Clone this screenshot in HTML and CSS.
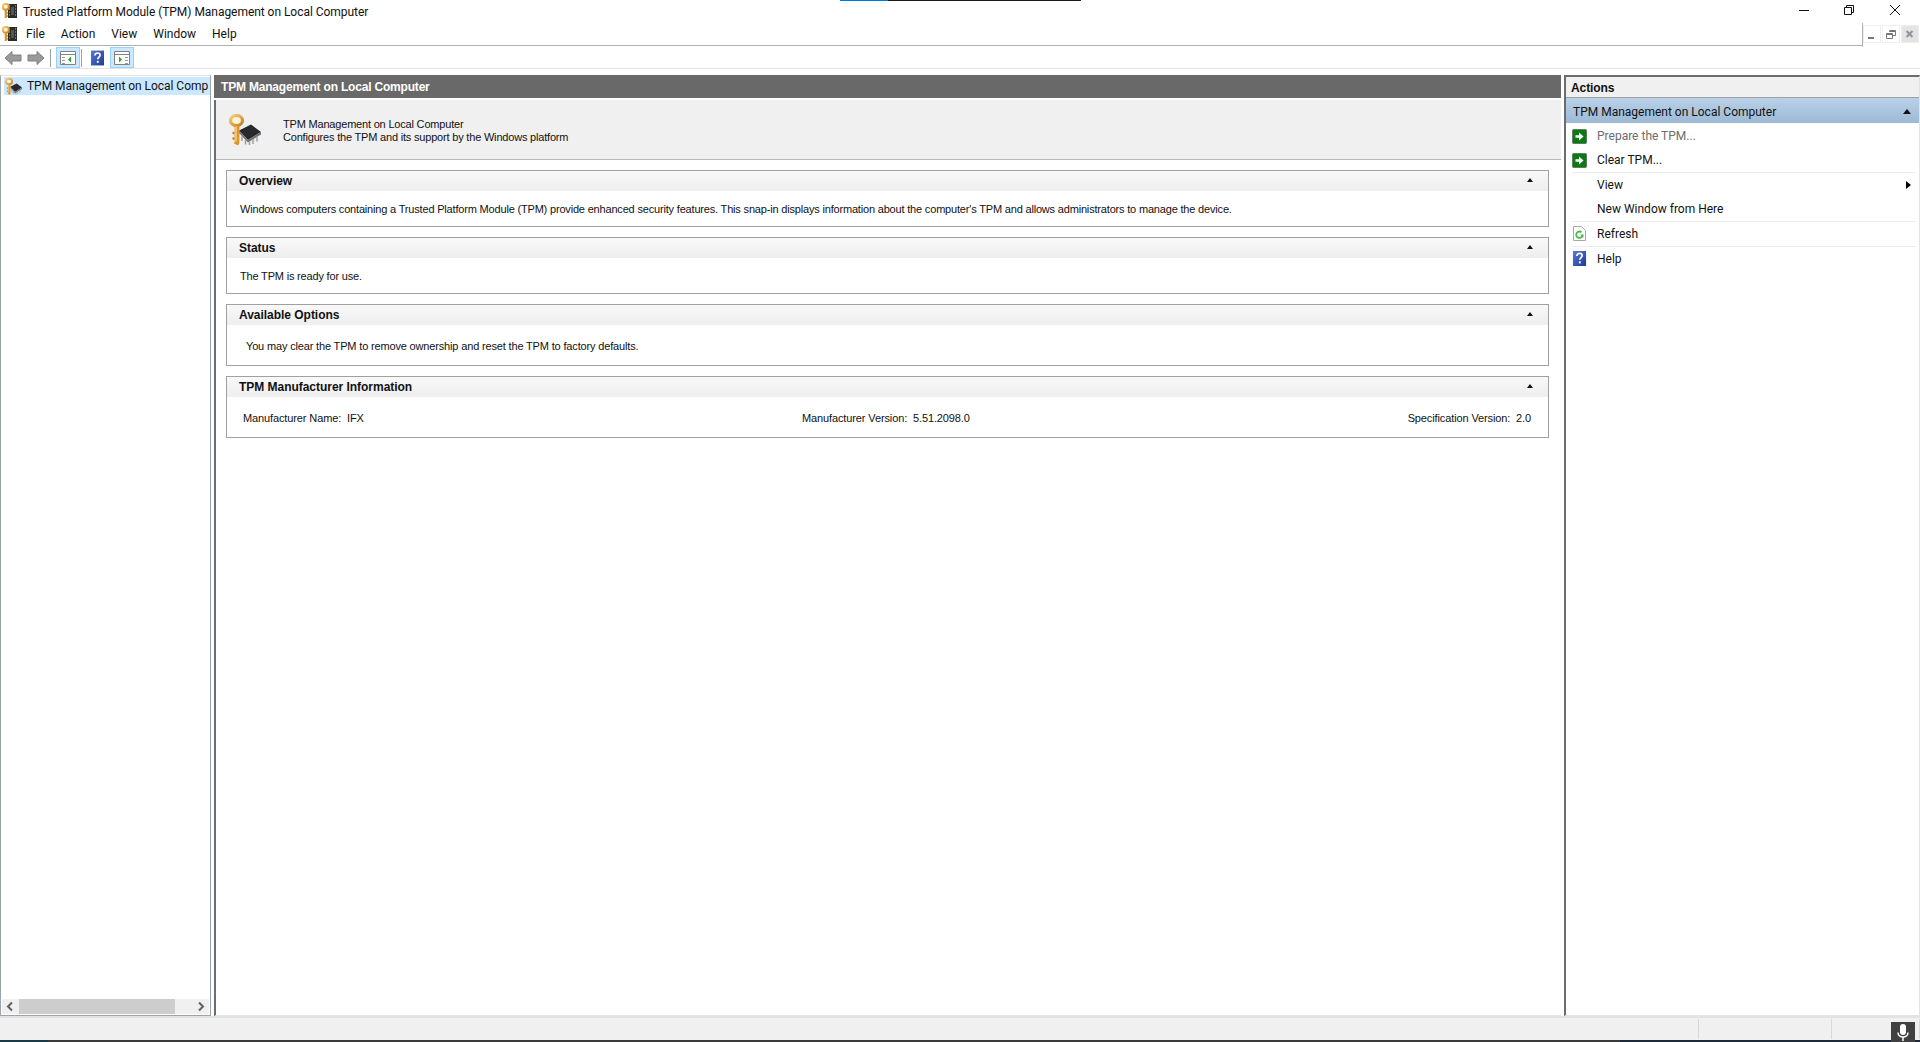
FILE: index.html
```html
<!DOCTYPE html>
<html lang="en">
<head>
<meta charset="utf-8">
<title>Trusted Platform Module (TPM) Management on Local Computer</title>
<link rel="stylesheet" href="styles.css">
</head>
<body>
<svg class="defs" width="0" height="0" aria-hidden="true">
  <defs>
    <linearGradient id="gold" x1="0" y1="0" x2="1" y2="1"><stop offset="0" stop-color="#f7cf7c"/><stop offset="1" stop-color="#c47f1c"/></linearGradient>
    <linearGradient id="blue" x1="0" y1="0" x2="1" y2="1"><stop offset="0" stop-color="#5a78d8"/><stop offset="1" stop-color="#1c3a94"/></linearGradient>
    <symbol id="appicon" viewBox="0 0 16 16">
      <rect x="6" y="1" width="9" height="14" fill="#2b2b2b"/>
      <path d="M7 3h1M7 6h1M7 9h1M7 12h1M13 3h1M13 6h1M13 9h1M13 12h1" stroke="#bbb" stroke-width="1"/>
      <rect x="9" y="4" width="3" height="8" fill="#555"/>
      <ellipse cx="3.800" cy="3.800" rx="3" ry="3" fill="#fff3d0" stroke="url(#gold)" stroke-width="2"/>
      <path d="M3.800 6.500V15M3.800 10h2M3.800 13h2" stroke="#d8932a" stroke-width="2.200"/>
    </symbol>
    <symbol id="tpmicon" viewBox="0 0 32 32">
      <path d="M10 16.500L22 10.500l10 7.500-13 8z" fill="#29292d"/>
      <path d="M10 16.500l9 9.500 13-8v2.500l-13 8-9-9.500z" fill="#6f6f74"/>
      <path d="M13 22v5M16.500 25.500v5M20.500 27.500v3.500M24 25v5M28 22.500v5" stroke="#a0a0a0" stroke-width="1.500"/>
      <ellipse cx="7.500" cy="6.500" rx="6" ry="5" fill="#fdf3d8" stroke="url(#gold)" stroke-width="3.200"/>
      <path d="M8 11.500v17l-1 2" fill="none" stroke="#dd962c" stroke-width="4.800"/>
      <path d="M5.500 19H3.500M5.500 24.500H3.500" stroke="#c47f1c" stroke-width="2.400"/>
      <path d="M7 12.500v15" stroke="#f9d488" stroke-width="1.400"/>
    </symbol>
    <symbol id="helpicon" viewBox="0 0 14 16">
      <rect width="14" height="16" fill="url(#blue)"/>
      <path d="M4.200 5.200C4.200 3.400 5.400 2.600 7 2.600s2.800.9 2.800 2.400c0 2-2.500 2.200-2.500 4.400" fill="none" stroke="#fff" stroke-width="1.800"/>
      <rect x="6.300" y="11" width="2" height="2.200" fill="#fff"/>
    </symbol>
    <symbol id="greenarrow" viewBox="0 0 15 15">
      <rect x=".5" y=".5" width="14" height="14" rx="1" fill="#0b7a13" stroke="#5d7d60"/>
      <path d="M3.500 6.200h3.500V3.500l4.500 4-4.500 4V8.800H3.500z" fill="#fff"/>
    </symbol>
  </defs>
</svg>

<div class="progress"><span class="progress-done"></span></div>

<div class="window">
  <header class="titlebar">
    <svg class="app-icon"><use href="#appicon"/></svg>
    <span class="title-text">Trusted Platform Module (TPM) Management on Local Computer</span>
    <div class="win-controls">
      <svg class="win-btn" viewBox="0 0 46 22"><path d="M19 10.500h10" stroke="#111" fill="none"/></svg>
      <svg class="win-btn" viewBox="0 0 46 22"><path d="M18.500 7.500h7v7h-7zM20.500 7.500v-2h7v7h-2" stroke="#111" fill="none"/></svg>
      <svg class="win-btn" viewBox="0 0 46 22"><path d="M18 5l10 10M28 5l-10 10" stroke="#111" fill="none"/></svg>
    </div>
  </header>

  <nav class="menubar">
    <svg class="menu-icon"><use href="#appicon"/></svg>
    <span class="menu-item">File</span>
    <span class="menu-item">Action</span>
    <span class="menu-item">View</span>
    <span class="menu-item">Window</span>
    <span class="menu-item">Help</span>
    <div class="mdi-controls">
      <span class="mdi-btn"><svg viewBox="0 0 18 18" width="18" height="18"><path d="M5 13h6" stroke="#777" stroke-width="2"/></svg></span>
      <span class="mdi-btn"><svg viewBox="0 0 18 18" width="18" height="18"><path d="M4.500 8.500h6v5h-6zM4.500 9.500h6M7.500 6.500v-1h6v5h-3M7.500 6.500h6" stroke="#777" fill="none"/></svg></span>
      <span class="mdi-btn mdi-close"><svg viewBox="0 0 18 18" width="18" height="18"><path d="M5.500 6l6 6M11.500 6l-6 6" stroke="#8a949c" stroke-width="2"/></svg></span>
    </div>
  </nav>

  <div class="toolbar">
    <svg class="tool-arrow" viewBox="0 0 18 16"><path d="M8 1.500L1 8l7 6.500V11h9V5H8z" fill="#9a9a9a" stroke="#808080"/></svg>
    <svg class="tool-arrow" viewBox="0 0 18 16"><path d="M10 1.500L17 8l-7 6.500V11H1V5h9z" fill="#9a9a9a" stroke="#808080"/></svg>
    <span class="tool-sep"></span>
    <span class="tool-btn active">
      <svg viewBox="0 0 16 14" width="16" height="14"><path d="M.5 .5h15v13H.5z" fill="#fff" stroke="#808080"/><path d="M.5 3.500h15" stroke="#808080"/><path d="M2 6h3v1H2zM2 9h3v1H2zM2 12h3v1H2z" fill="#999"/><path d="M11 5.500v6l-3-3z" fill="#2aa32a"/></svg>
    </span>
    <span class="tool-sep tool-sep-b"></span>
    <svg class="tool-help"><use href="#helpicon"/></svg>
    <span class="tool-btn active">
      <svg viewBox="0 0 16 14" width="16" height="14"><path d="M.5 .5h15v13H.5z" fill="#fff" stroke="#808080"/><path d="M.5 3.500h15" stroke="#808080"/><path d="M11 6h3v1h-3zM11 9h3v1h-3zM11 12h3v1h-3z" fill="#999"/><path d="M5 5.500v6l3-3z" fill="#2aa32a"/></svg>
    </span>
  </div>

  <main class="workspace">
    <aside class="tree">
      <div class="tree-body">
        <div class="tree-row">
          <svg class="tree-icon" viewBox="0 0 32 32"><use href="#tpmicon"/></svg>
          <span class="tree-label">TPM Management on Local Comp</span>
        </div>
      </div>
      <div class="hscroll">
        <svg class="hscroll-btn" viewBox="0 0 17 15"><path d="M10 3.500L6 7.500l4 4" fill="none" stroke="#606060" stroke-width="2"/></svg>
        <div class="hscroll-track"><div class="hscroll-thumb"></div></div>
        <svg class="hscroll-btn" viewBox="0 0 17 15"><path d="M7 3.500l4 4-4 4" fill="none" stroke="#606060" stroke-width="2"/></svg>
      </div>
    </aside>

    <section class="center">
      <h1 class="center-head">TPM Management on Local Computer</h1>
      <div class="center-frame">
        <div class="intro">
          <svg class="intro-icon"><use href="#tpmicon"/></svg>
          <div class="intro-text">
            <div>TPM Management on Local Computer</div>
            <div>Configures the TPM and its support by the Windows platform</div>
          </div>
        </div>
        <div class="sections">
          <article class="card card-overview">
            <div class="card-head"><span>Overview</span><i class="caret"></i></div>
            <p class="card-body">Windows computers containing a Trusted Platform Module (TPM) provide enhanced security features. This snap-in displays information about the computer's TPM and allows administrators to manage the device.</p>
          </article>
          <article class="card card-status">
            <div class="card-head"><span>Status</span><i class="caret"></i></div>
            <p class="card-body">The TPM is ready for use.</p>
          </article>
          <article class="card card-options">
            <div class="card-head"><span>Available Options</span><i class="caret"></i></div>
            <p class="card-body card-body-inset">You may clear the TPM to remove ownership and reset the TPM to factory defaults.</p>
          </article>
          <article class="card card-info">
            <div class="card-head"><span>TPM Manufacturer Information</span><i class="caret"></i></div>
            <div class="info-row">
              <span class="info-a">Manufacturer Name:&nbsp; IFX</span>
              <span class="info-b">Manufacturer Version:&nbsp; 5.51.2098.0</span>
              <span class="info-c">Specification Version:&nbsp; 2.0</span>
            </div>
          </article>
        </div>
      </div>
    </section>

    <aside class="actions">
      <div class="actions-title">Actions</div>
      <div class="actions-group"><span>TPM Management on Local Computer</span><i class="caret caret-large"></i></div>
      <ul class="action-list">
        <li class="action disabled"><svg class="action-icon"><use href="#greenarrow"/></svg>Prepare the TPM...</li>
        <li class="action rule"><svg class="action-icon"><use href="#greenarrow"/></svg>Clear TPM...</li>
        <li class="action"><span class="action-icon"></span>View<i class="submenu"></i></li>
        <li class="action rule"><span class="action-icon"></span>New Window from Here</li>
        <li class="action rule">
          <svg class="action-icon" viewBox="0 0 15 15"><path d="M1.500 .5h8l4 4v10h-12z" fill="#fff" stroke="#a8a8a8"/><path d="M10.500 9.500a3.200 3.200 0 1 1-1-3.200" fill="none" stroke="#4cb84c" stroke-width="1.800"/><path d="M8 8.500l3.500 0 0 3.500z" fill="#4cb84c"/></svg>
          Refresh
        </li>
        <li class="action"><svg class="action-icon"><use href="#helpicon"/></svg>Help</li>
      </ul>
    </aside>
  </main>

  <footer class="statusbar">
    <span class="status-cell status-cell-main"></span>
    <span class="status-cell status-cell-mid"></span>
    <span class="status-cell status-cell-end"></span>
    <span class="mic">
      <svg viewBox="0 0 24 20" width="24" height="20"><rect x="9" y="2" width="6" height="11" rx="3" fill="#fff"/><path d="M7 10.500c0 6 10 6 10 0M12 15v4" fill="none" stroke="#fff" stroke-width="1.500"/></svg>
    </span>
  </footer>
  <div class="taskstrip"><span class="task-a"></span><span class="task-b"></span><span class="task-c"></span></div>
</div>
</body>
</html>
```

FILE: styles.css
```css
* { box-sizing: border-box; }
html, body { margin: 0; padding: 0; height: 100%; overflow: hidden; background: #fff; }
body { font-family: Roboto, "Open Sans", "Liberation Sans", sans-serif; font-size: 12px; color: #000; }
.defs { position: absolute; }
h1, p, ul { margin: 0; padding: 0; }
i { display: block; }

.progress { position: absolute; top: 0; left: 840px; width: 241px; height: 1px; background: #1a1a1a; }
.progress-done { display: block; width: 48px; height: 1px; background: #0078d7; }

.window { display: flex; flex-direction: column; height: 1042px; }

.titlebar { height: 22px; flex: none; display: flex; align-items: center; padding-left: 2px; }
.app-icon { width: 16px; height: 16px; margin-right: 5px; }
.title-text { font-size: 12px; color: #111; margin-top: 2px; letter-spacing: -.04px; }
.win-controls { margin-left: auto; display: flex; padding-right: 2px; }
.win-btn { width: 46px; height: 22px; }

.menubar { height: 24px; flex: none; display: flex; align-items: center; padding-left: 2px; border-bottom: 1px solid #b0b0b0; position: relative; }
.menu-icon { width: 16px; height: 16px; margin-right: 8px; }
.menu-item { margin-right: 16px; font-size: 12px; color: #111; }
.mdi-controls { position: absolute; right: 0; top: 1px; height: 24px; width: 58px; display: flex; gap: 1px; padding: 2px 1px 3px 0; background: #fff; border-left: 1px solid #b0b0b0; }
.mdi-btn { width: 18px; height: 18px; border: 1px solid #eee; display: flex; }
.mdi-btn svg { margin: -1px; }
.mdi-close { background: #e4e4e4; }

.toolbar { height: 23px; flex: none; display: flex; align-items: center; padding: 1px 0 0 4px; border-bottom: 1px solid #e3e3e3; background: #fff; }
.tool-arrow { width: 18px; height: 16px; margin-right: 5px; }
.tool-sep { width: 1px; height: 18px; background: #a0a0a0; margin: 0 5px 0 0; }
.tool-sep-b { margin: 0 9px 0 1px; }
.tool-btn { width: 24px; height: 21px; display: flex; align-items: center; justify-content: center; background: #cce8ff; border: 1px solid #99d1ff; }
.tool-help { width: 13px; height: 16px; margin-right: 6px; }

.workspace { flex: 1; min-height: 0; display: flex; padding-top: 6px; background: #fff; }

.tree { width: 211px; flex: none; display: flex; flex-direction: column; border: 1px solid #9aa3ac; border-top-color: #e3e3e3; padding: 0 1px 1px 1px; }
.tree-body { flex: 1; padding: 1px 0 0 2px; }
.tree-row { height: 18px; display: flex; align-items: center; background: #cce8ff; width: 206px; overflow: hidden; white-space: nowrap; padding-left: 1px; }
.tree-icon { width: 17px; height: 17px; flex: none; margin-right: 5px; }
.tree-label { font-size: 12px; color: #111; letter-spacing: -.04px; }
.hscroll { height: 15px; flex: none; display: flex; background: #f0f0f0; }
.hscroll-btn { width: 17px; height: 15px; flex: none; }
.hscroll-track { flex: 1; }
.hscroll-thumb { width: 156px; height: 15px; background: #cdcdcd; }

.center { flex: 1; min-width: 0; margin: 0 3px 0 3px; display: flex; flex-direction: column; }
.center-head { height: 23px; flex: none; background: #696969; color: #fff; font-family: "Liberation Sans", sans-serif; font-size: 12px; font-weight: 700; line-height: 23px; padding: 1px 0 0 7px; letter-spacing: -.19px; }
.center-frame { flex: 1; min-height: 0; margin-top: 2px; border-left: 2px solid #6d6d6d; border-bottom: 1px solid #e3e3e3; display: flex; flex-direction: column; }
.intro { height: 60px; flex: none; display: flex; align-items: center; background: #f0f0f0; border-bottom: 1px solid #b9b9b9; padding-left: 13px; }
.intro-icon { width: 32px; height: 32px; margin-right: 22px; }
.intro-text { font-family: "Liberation Sans", sans-serif; font-size: 11px; line-height: 13px; color: #111; padding-top: 3px; letter-spacing: -.19px; }

.sections { display: flex; flex-direction: column; gap: 10px; padding: 10px 12px 0 10px; }
.card { border: 1px solid #a0a0a0; flex: none; }
.card-overview, .card-status { height: 57px; }
.card-options, .card-info { height: 62px; }
.card-head { height: 20px; display: flex; align-items: center; justify-content: space-between; padding: 0 15px 0 12px; background: linear-gradient(#f9f9f9, #eeeeee); font-family: "Liberation Sans", sans-serif; font-size: 12px; font-weight: 700; color: #111; letter-spacing: -.03px; }
.caret { width: 0; height: 0; border-left: 3px solid transparent; border-right: 3px solid transparent; border-bottom: 4px solid #111; margin-bottom: 2px; }
.card-body { font-family: "Liberation Sans", sans-serif; font-size: 11px; line-height: 14px; color: #111; padding: 11px 0 0 13px; white-space: nowrap; letter-spacing: -.18px; }
.card-body-inset { padding: 14px 0 0 19px; letter-spacing: -.16px; }
.info-row { display: grid; grid-template-columns: 559px 1fr auto; font-family: "Liberation Sans", sans-serif; font-size: 11px; line-height: 14px; color: #111; padding: 14px 17px 0 16px; white-space: nowrap; letter-spacing: -.12px; }

.actions { width: 356px; flex: none; display: flex; flex-direction: column; border-left: 2px solid #6d6d6d; border-top: 2px solid #6d6d6d; border-right: 1px solid #e3e3e3; border-bottom: 1px solid #e3e3e3; }
.actions-title { height: 21px; flex: none; background: #f0f0f0; border-bottom: 1px solid #a0a0a0; font-family: "Liberation Sans", sans-serif; font-weight: 700; font-size: 12px; line-height: 21px; padding: 1px 0 0 5px; color: #111; letter-spacing: -.08px; }
.actions-group { height: 25px; flex: none; display: flex; align-items: center; justify-content: space-between; padding: 2px 8px 0 7px; background: linear-gradient(#b9d1e8, #9db9d6); font-size: 12px; color: #111; }
.caret-large { border-left-width: 4px; border-right-width: 4px; border-bottom-width: 5px; margin: 0; }
.action-list { list-style: none; padding: 1px 3px 0 6px; }
.action { height: 24.500px; display: flex; align-items: center; font-size: 12px; color: #111; position: relative; }
.action.disabled { color: #6d6d6d; }
.action.rule { border-bottom: 1px solid #ececec; }
.action-icon { width: 15px; height: 15px; flex: none; margin-right: 10px; }
.submenu { position: absolute; right: 5px; top: 8px; width: 0; height: 0; border-top: 4px solid transparent; border-bottom: 4px solid transparent; border-left: 5px solid #000; }

.statusbar { height: 24px; flex: none; display: flex; background: #f0f0f0; border-top: 2px solid #e3e3e3; position: relative; }
.status-cell { border-right: 1px solid #d8d8d8; height: 20px; margin-top: 1px; }
.status-cell-main { width: 1699px; }
.status-cell-mid { width: 133px; }
.status-cell-end { flex: 1; }
.mic { position: absolute; left: 1891px; top: 4px; width: 24px; height: 20px; background: #404040; }
.mic svg { display: block; }
.taskstrip { height: 2px; flex: none; display: flex; }
.task-a { width: 48px; background: #1b3a47; }
.task-b { flex: 1; background: #3a3a3a; }
.task-c { width: 300px; background: #1c2a3c; }
```
